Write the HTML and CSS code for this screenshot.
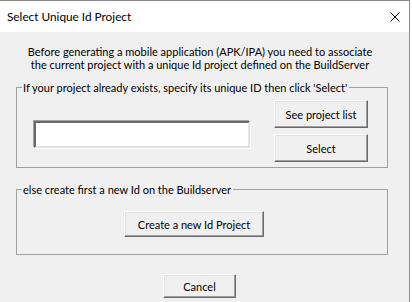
FILE: index.html
```html
<!DOCTYPE html>
<html>
<head>
<meta charset="utf-8">
<link rel="stylesheet" href="styles.css">
</head>
<body>
<div class="window">
  <div class="titlebar">
    <span class="title">Select Unique Id Project</span>
    <svg class="close" width="10" height="10" viewBox="0 0 10 10"><path d="M0.5 0.5 L9.5 9.5 M9.5 0.5 L0.5 9.5" stroke="#000" stroke-width="1" fill="none"/></svg>
  </div>
  <div class="content">
    <p class="intro">Before generating a mobile application (APK/IPA) you need to associate<br>the current project with a unique Id project defined on the BuildServer</p>
    <fieldset class="group group-existing">
      <legend>If your project already exists, specify its unique ID then click 'Select'</legend>
      <div class="existing-row">
        <input class="id-input" type="text">
        <div class="btn-col">
          <button class="btn btn-wide">See project list</button>
          <button class="btn btn-wide">Select</button>
        </div>
      </div>
    </fieldset>
    <fieldset class="group group-new">
      <legend>else create first a new Id on the Buildserver</legend>
      <div class="new-row">
        <button class="btn btn-create">Create a new Id Project</button>
      </div>
    </fieldset>
    <div class="footer">
      <button class="btn btn-cancel">Cancel</button>
    </div>
  </div>
</div>
</body>
</html>
```
FILE: styles.css
```css
html, body {
  margin: 0;
  padding: 0;
  background: #ffffff;
}
body {
  font-family: Lato, "Liberation Sans", sans-serif;
  font-size: 11px;
  color: #000;
  width: 412px;
  height: 302px;
  overflow: hidden;
  white-space: nowrap;
}
.window {
  width: 410px;
  height: 302px;
  border-top: 1px solid #8c8c8c;
  border-right: 1px solid #8c8c8c;
  background: #f0f0f0;
  box-sizing: border-box;
}
.titlebar {
  height: 31px;
  background: #ffffff;
  display: flex;
  align-items: center;
  padding-left: 7px;
  padding-right: 9px;
  justify-content: space-between;
}
.title {
  font-size: 11.8px;
  line-height: 14px;
  padding-top: 1px;
}
.close {
  display: block;
  margin-top: 1px;
}
.content {
  padding-top: 13px;
}
.intro {
  margin: 0;
  text-align: center;
  line-height: 13px;
  padding-right: 9px;
}
.group {
  margin: 0 0 0 16px;
  width: 372px;
  box-sizing: border-box;
  border: 1px solid #a0a0a0;
  padding: 0;
  min-width: 0;
}
.group legend {
  padding: 0 2px 0 1px;
  margin-left: 5px;
  line-height: 13px;
}
.group-existing {
  margin-top: 10px;
}
.existing-row {
  display: flex;
  justify-content: space-between;
  padding: 6px 19px 5px 17px;
}
.id-input {
  width: 216px;
  height: 27px;
  box-sizing: border-box;
  margin: 21px 0 0 0;
  background: #fff;
  border-style: solid;
  border-width: 2px;
  border-color: #696969 #e3e3e3 #e3e3e3 #696969;
  box-shadow: -1px -1px 0 #a0a0a0, 1px 1px 0 #fff;
  padding: 0 3px;
  font: inherit;
  outline: none;
}
.btn-col {
  display: flex;
  flex-direction: column;
  gap: 6px;
}
.btn {
  font: inherit;
  color: #000;
  background: #f0f0f0;
  border: 1px solid;
  border-color: #ffffff #696969 #696969 #ffffff;
  box-shadow: inset -1px -1px 0 #a0a0a0, inset 1px 1px 0 #e3e3e3;
  padding: 0;
  margin: 0;
  box-sizing: border-box;
}
.btn-wide {
  width: 94px;
  height: 28px;
}
.group-new {
  margin-top: 15px;
}
.new-row {
  display: flex;
  padding: 15px 0 17px 107px;
}
.btn-create {
  width: 140px;
  height: 26px;
}
.footer {
  display: flex;
  padding: 19px 0 0 163px;
}
.btn-cancel {
  width: 73px;
  height: 24px;
}
```
